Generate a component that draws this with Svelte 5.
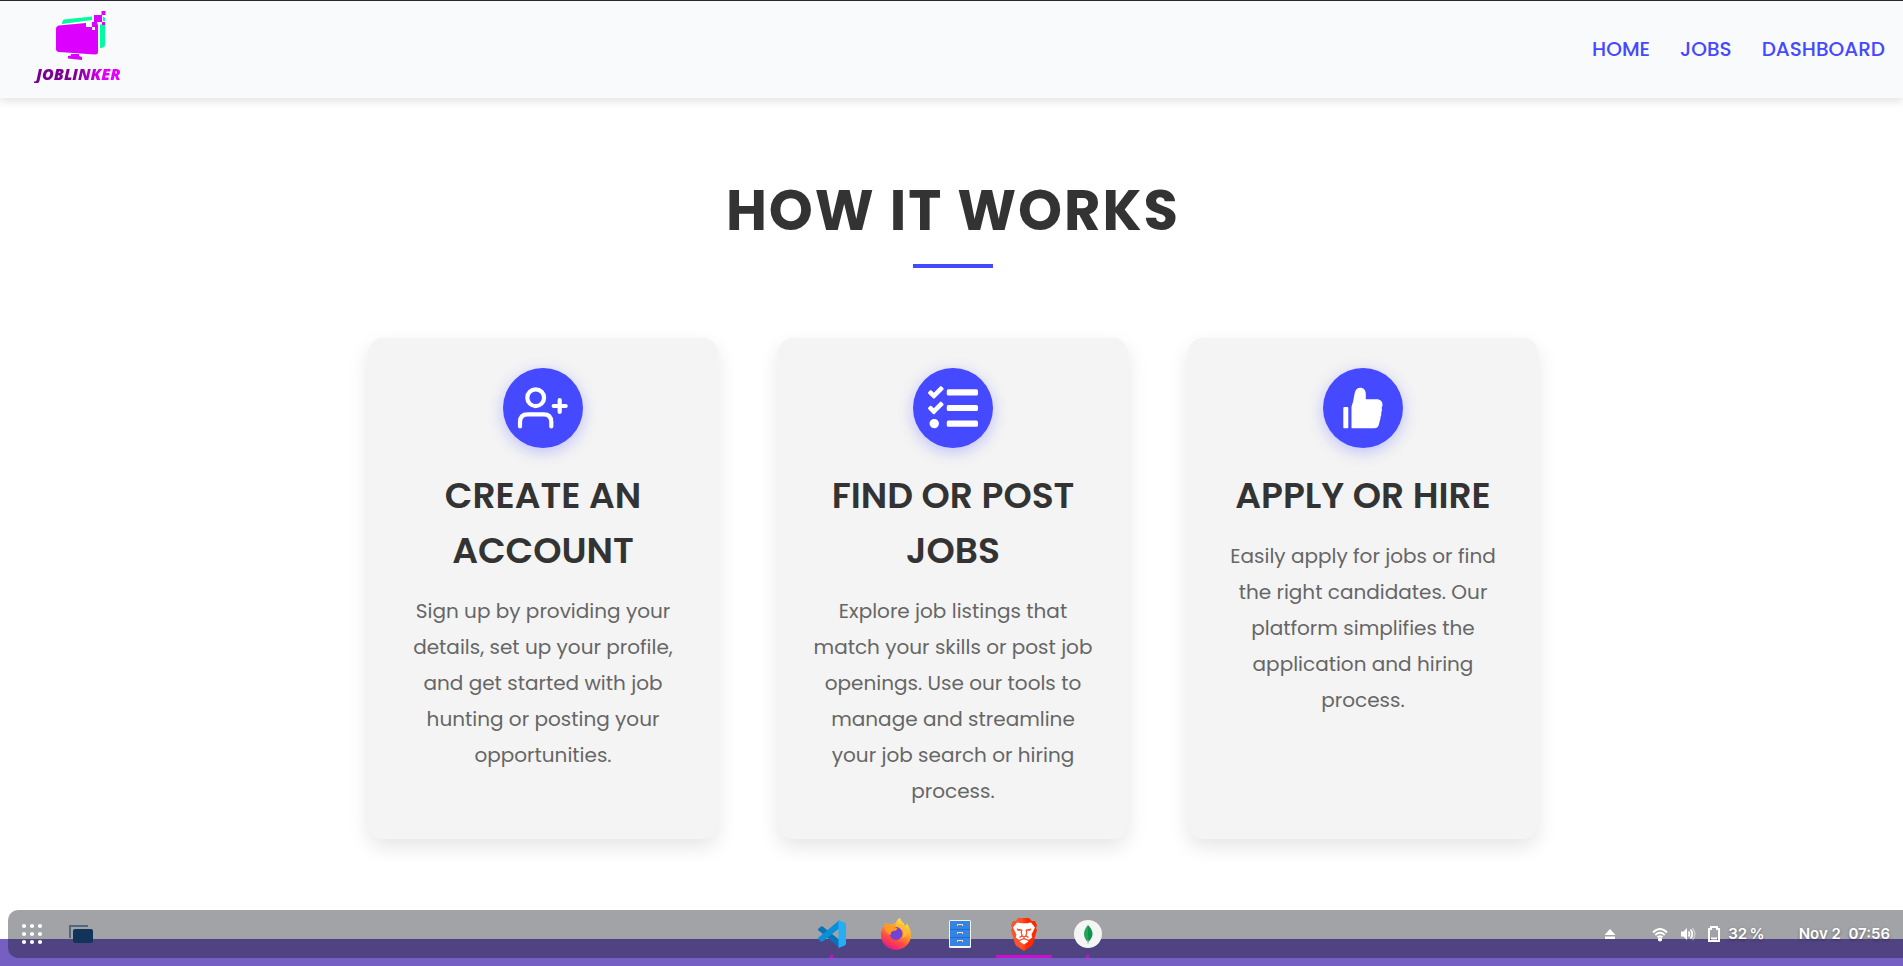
<script>
  const links = ['Home', 'Jobs', 'Dashboard'];
  const steps = [
    {
      icon: 'user',
      title: 'Create an Account',
      text: 'Sign up by providing your details, set up your profile, and get started with job hunting or posting your opportunities.'
    },
    {
      icon: 'tasks',
      title: 'Find or Post Jobs',
      text: 'Explore job listings that match your skills or post job openings. Use our tools to manage and streamline your job search or hiring process.'
    },
    {
      icon: 'like',
      title: 'Apply or Hire',
      text: 'Easily apply for jobs or find the right candidates. Our platform simplifies the application and hiring process.'
    }
  ];
</script>

<div class="screen">
  <header class="navbar">
    <a class="logo" href="#home">
      <svg width="56" height="52" viewBox="52 8 56 52" aria-hidden="true">
        <path d="M64 18.500 92 15.500v3.500L62 23q.3-4 2-4.500Z" fill="#00fca0" />
        <path d="M100 23.500h5V44q0 3-5 3Z" fill="#00fca0" />
        <path d="M103 15.500 105 17v3h-2Z" fill="#00fca0" />
        <path d="M59 24.500 86 22v4h6v-4l4-.5q2 .5 2 3V51q0 2.500-3 2.500L59 51q-3-.3-3-3V28q0-3 3-3.500Z" fill="#dc00ff" />
        <path d="M94 14h8v7h-8zM101.500 10h4v4h-4zM102 21h3v3h-3zM92 21h5v5h-5z" fill="#dc00ff" />
        <path d="M92 26h3v3h-3z" fill="#fff" />
        <path d="M71 53h8v2l3 1v3l-14-1.500V55l3-.5Z" fill="#dc00ff" />
      </svg>
      <span>JOBLINKER</span>
    </a>
    <nav>
      {#each links as link}
        <a href="#{link.toLowerCase()}">{link}</a>
      {/each}
    </nav>
  </header>

  <main>
    <h1>How It Works</h1>
    <section class="cards">
      {#each steps as step}
        <article>
          <div class="badge">
            {#if step.icon === 'user'}
              <svg viewBox="0 0 80 80" fill="none" stroke="#fff" stroke-width="4.200" stroke-linecap="round" aria-hidden="true">
                <circle cx="32.700" cy="29.700" r="8.400" />
                <path d="M17 58.500V54q0-7.700 7.700-7.700h16q7.600 0 7.600 7.700v4.500M56.700 32v12M50.700 38h12" />
              </svg>
            {:else if step.icon === 'tasks'}
              <svg viewBox="-154 -154 820 820" fill="#fff" aria-hidden="true">
                <path d="M139.61 35.5a12 12 0 0 0-17 0L58.93 98.81l-22.7-22.12a12 12 0 0 0-17 0L3.53 92.41a12 12 0 0 0 0 17l47.59 47.4a12.78 12.78 0 0 0 17.61 0l15.59-15.62L156.52 69a12.09 12.09 0 0 0 .09-17zm0 159.19a12 12 0 0 0-17 0l-63.68 63.72-22.7-22.1a12 12 0 0 0-17 0L3.53 252a12 12 0 0 0 0 17L51 316.5a12.77 12.77 0 0 0 17.6 0l15.7-15.69 72.2-72.22a12 12 0 0 0 .09-16.9zM64 368c-26.49 0-48.59 21.5-48.59 48S37.53 464 64 464a48 48 0 0 0 0-96zm432 16H208a16 16 0 0 0-16 16v32a16 16 0 0 0 16 16h288a16 16 0 0 0 16-16v-32a16 16 0 0 0-16-16zm0-320H208a16 16 0 0 0-16 16v32a16 16 0 0 0 16 16h288a16 16 0 0 0 16-16V80a16 16 0 0 0-16-16zm0 160H208a16 16 0 0 0-16 16v32a16 16 0 0 0 16 16h288a16 16 0 0 0 16-16v-32a16 16 0 0 0-16-16z" />
              </svg>
            {:else}
              <svg viewBox="0 0 80 80" fill="#fff" aria-hidden="true">
                <rect x="20.300" y="39" width="5" height="21.200" rx="1" />
                <path d="M28.500 60.200V38.500c1.800-4 2.200-9 3.200-13.500.8-3.500 2.800-5.300 5.500-5.300 3.500 0 5.600 2.600 5.600 6v5.600h11c3.500 0 5.700 2.400 5.700 5.400 0 1.200-.3 2.200-.9 3 .6 1.700.5 3.500-.4 4.800.4 1.800.1 3.400-.8 4.600.2 1.500 0 2.800-.7 4l-.6 2.600c-.6 3-2 4.500-5 4.500Z" />
              </svg>
            {/if}
          </div>
          <h2>{step.title}</h2>
          <p>{step.text}</p>
        </article>
      {/each}
    </section>
  </main>

  <footer class="wallpaper"></footer>

  <div class="dock">
    <div class="group">
      <button aria-label="Show applications">
        <svg width="24" height="24" viewBox="0 0 24 24" fill="#fff">
          {#each [4, 12, 20] as y}
            {#each [4, 12, 20] as x}
              <circle cx={x} cy={y} r="2.100" />
            {/each}
          {/each}
        </svg>
      </button>
      <button aria-label="Workspaces">
        <svg width="26" height="20" viewBox="0 0 26 20">
          <path d="M2 14V2h18" fill="none" stroke="#53677f" stroke-width="2" />
          <rect x="5" y="5" width="20" height="14" rx="2" fill="#12335a" />
        </svg>
      </button>
    </div>

    <div class="apps">
      <button class="small" aria-label="Code editor">
        <svg width="32" height="32" viewBox="0 0 32 32">
          <path d="M2.300 10.800 5 8.600q.8-.6 1.700 0L23 21.500v8L2.300 12.200q-.7-.7 0-1.400Z" fill="#0a73b8" />
          <path d="M2.300 21.200 5 23.400q.8.600 1.700 0L23 10.500v-8L2.300 19.800q-.7.700 0 1.400Z" fill="#0a8fd8" />
          <path d="M22.500 2 29 4.700q1 .5 1 1.600v19.400q0 1.100-1 1.600L22.500 30Z" fill="#26aef5" />
        </svg>
      </button>
      <button aria-label="Firefox">
        <svg width="32" height="32" viewBox="0 0 32 32">
          <defs>
            <linearGradient id="fox" x1=".8" y1="0" x2=".3" y2="1">
              <stop offset="0" stop-color="#fff04a" /><stop offset=".4" stop-color="#ffa52a" />
              <stop offset=".7" stop-color="#ff4a42" /><stop offset="1" stop-color="#e01890" />
            </linearGradient>
          </defs>
          <path d="M20 0q1 3.500 4 5.500l1 3 2-3q4 6 4 11.500A15 15 0 0 1 1 17Q1 10 5.500 6v-2l3 2.500h3L16 5q1-4 4-5Z" fill="url(#fox)" />
          <circle cx="16" cy="15.500" r="6.500" fill="#7442d4" />
          <path d="M4 8.500 6 5l3 2h3.500l3.500-1-1.500 3 3 1.500q-1 2.500-4.500 2.500-3 1-2 4-5-1-7-8.500Z" fill="#ff9a25" />
          <path d="M16 8.500q6-1 7.500 3.500 1 5-1.500 8 4-1 5-5-1-7-7-9Z" fill="#ffbb34" />
        </svg>
      </button>
      <button aria-label="Files">
        <svg width="32" height="32" viewBox="0 0 32 32">
          <rect x="5" y="2" width="22" height="28" rx="1.500" fill="#f6f5f4" />
          <path d="M6 3h20v25H6z" fill="#3584e4" />
          <path d="M6 11.500h20M6 19.500h20" stroke="#1c6bd0" />
          <path d="M13 6h6v2h-6zM13 14h6v2h-6zM13 22h6v2h-6z" fill="#deddda" />
          <path d="M14 7.500h4M14 15.500h4M14 23.500h4" stroke="#77767b" />
        </svg>
      </button>
      <button class="active" aria-label="Brave">
        <svg width="32" height="34" viewBox="0 0 32 34">
          <defs>
            <linearGradient id="lion"><stop offset=".4" stop-color="#fb542b" /><stop offset=".6" stop-color="#ff2a00" /></linearGradient>
          </defs>
          <path d="M10 1h11l3 3h3l2 4-1 3 1 2-4 14q-1 2-3 3l-6 4-6-4q-2-1-3-3L3 13l1-2-1-3 2-4h3Z" fill="url(#lion)" />
          <path d="m9 5.500 4 .7h6l4-.7 4 5-3.500 7 .8 3-5.300 3.500h-6l-5.300-3.500.8-3-3.500-7Z" fill="#fff" />
          <path d="m11.500 24.500 4.500-2.500 4.500 2.500-4.500 3Z" fill="#fff" />
          <path d="m8.500 11.500 5 1-1 1.500-3-.5ZM23.500 11.500l-5 1 1 1.500 3-.5Z" fill="#fb3d15" />
          <path d="m14 12.500-.8 3 1 3-2.700 2M18 12.500l.8 3-1 3 2.700 2M14 19l2 1 2-1M16 20v2.500M11 23.500l5-2 5 2" fill="none" stroke="#fb3d15" stroke-width="1.100" />
        </svg>
      </button>
      <button class="small" aria-label="Database browser">
        <svg width="32" height="32" viewBox="0 0 32 32">
          <circle cx="16" cy="16" r="14" fill="#f5f5f5" />
          <path d="M16 7q-8 9 0 17.500Z" fill="#27a35a" />
          <path d="M16 7q9 9 0 17.500Z" fill="#12924f" />
          <path d="M16 22v4" stroke="#b8c4c2" />
        </svg>
      </button>
    </div>

    <div class="status">
      <svg class="eject" width="12" height="12" viewBox="0 0 12 12" fill="#fff" aria-hidden="true"><path d="M6 1 11.500 7H.5ZM1 8.500h10v2.500H1z" /></svg>
      <svg width="16" height="16" viewBox="0 0 16 16" fill="none" stroke="#fff" stroke-width="1.800" aria-hidden="true">
        <path d="M1 6.500q7-7 14 0M3.300 9q4.700-4.400 9.400 0M5.500 11.300q2.500-2.200 5 0" /><circle cx="8" cy="13.500" r="1.200" fill="#fff" />
      </svg>
      <svg width="16" height="16" viewBox="0 0 16 16" fill="none" stroke="#fff" stroke-width="1.700" aria-hidden="true">
        <path d="M1 5.500h2.500L7 2v12l-3.500-3.500H1Z" fill="#fff" stroke="none" />
        <path d="M8.500 5.500q2 2.500 0 5M10.500 3.500q3.500 4.500 0 9" /><path d="M12.500 2q4.500 6 0 12" opacity=".4" />
      </svg>
      <svg width="12" height="16" viewBox="0 0 12 16" fill="none" stroke="#fff" stroke-width="2" aria-hidden="true">
        <path d="M1 3h2V1h6v2h2v12H1ZM3 12.500h6" />
      </svg>
      <span>32&#8201;%</span>
      <time>Nov 2&nbsp; 07:56</time>
    </div>
  </div>
</div>

<style>
  :global(body) {
    margin: 0;
    background: #fff;
  }
  .screen {
    position: relative;
    display: flex;
    flex-direction: column;
    min-height: 100vh;
    box-sizing: border-box;
    border-top: 1px solid #2a2833;
    font-family: Poppins, Inter, sans-serif;
  }
  .navbar {
    display: flex;
    align-items: flex-start;
    justify-content: space-between;
    height: 97px;
    box-sizing: border-box;
    padding: 8px 18px 0 34px;
    background: #f9fafc;
    box-shadow: 0 4px 8px rgba(0, 0, 0, 0.1);
  }
  .logo {
    display: flex;
    flex-direction: column;
    align-items: center;
    gap: 4px;
    text-decoration: none;
  }
  .logo svg {
    margin-left: 4px;
  }
  .logo span {
    padding: 0 2px;
    font: italic 800 16px/18px 'Open Sans', sans-serif;
    color: transparent;
    background: linear-gradient(90deg, #7a0090 45%, #e400ff 80%);
    background-clip: text;
  }
  nav {
    display: flex;
    gap: 30px;
    padding-top: 25px;
  }
  nav a {
    font-size: 20px;
    line-height: 30px;
    font-weight: 500;
    color: #4549ff;
    text-decoration: none;
    text-transform: uppercase;
  }
  main {
    flex: 1;
    padding: 70px 0 80px 3px;
  }
  h1 {
    display: flex;
    flex-direction: column;
    align-items: center;
    gap: 10px;
    margin: 0 0 70px;
    font-size: 56px;
    line-height: 86px;
    font-weight: 700;
    letter-spacing: 2px;
    color: #333;
    text-transform: uppercase;
  }
  h1::after {
    content: '';
    width: 80px;
    height: 4px;
    background: #4549ff;
  }
  .cards {
    display: flex;
    justify-content: center;
    gap: 60px;
  }
  article {
    width: 350px;
    box-sizing: border-box;
    padding: 30px;
    border-radius: 15px;
    background: #f4f4f4;
    box-shadow: 0 8px 20px rgba(0, 0, 0, 0.1);
    text-align: center;
  }
  .badge {
    width: 80px;
    height: 80px;
    margin: 0 auto 20px;
    border-radius: 50%;
    background: #4549ff;
    box-shadow: 0 4px 15px rgba(69, 73, 255, 0.3);
  }
  .badge svg {
    display: block;
  }
  h2 {
    margin: 0 0 15px;
    font-size: 36px;
    line-height: 55px;
    font-weight: 600;
    color: #333;
    text-transform: uppercase;
  }
  p {
    margin: 0;
    font-size: 20px;
    line-height: 36px;
    color: #666;
  }
  .wallpaper {
    height: 27px;
    background: #755fc2;
  }
  .dock {
    position: absolute;
    left: 8px;
    right: 0;
    bottom: 8px;
    display: grid;
    grid-template-columns: 1fr auto 1fr;
    align-items: center;
    height: 48px;
    border-radius: 10px 0 0 10px;
    background: rgba(22, 24, 32, 0.4);
  }
  button {
    display: grid;
    place-items: center;
    padding: 0;
    border: 0;
    background: none;
  }
  .group {
    display: flex;
    align-items: center;
    gap: 24px;
    padding-left: 12px;
  }
  .apps {
    display: flex;
    gap: 8px;
    padding-left: 8px;
  }
  .apps button {
    position: relative;
    width: 56px;
    height: 48px;
  }
  .apps .small::after,
  .apps .active::after {
    content: '';
    position: absolute;
    bottom: 0;
    width: 3px;
    height: 3px;
    background: #c80fd0;
  }
  .apps .active::after {
    width: 56px;
  }
  .status {
    display: flex;
    align-items: center;
    justify-content: flex-end;
    gap: 12px;
    padding-right: 13px;
    color: #fff;
    font: 600 15px/20px Inter, sans-serif;
    text-shadow: 0 1px 3px rgba(0, 0, 0, 0.4);
  }
  .eject {
    margin-right: 24px;
  }
  .status span {
    margin-left: -4px;
  }
  time {
    margin-left: 22px;
  }
</style>
